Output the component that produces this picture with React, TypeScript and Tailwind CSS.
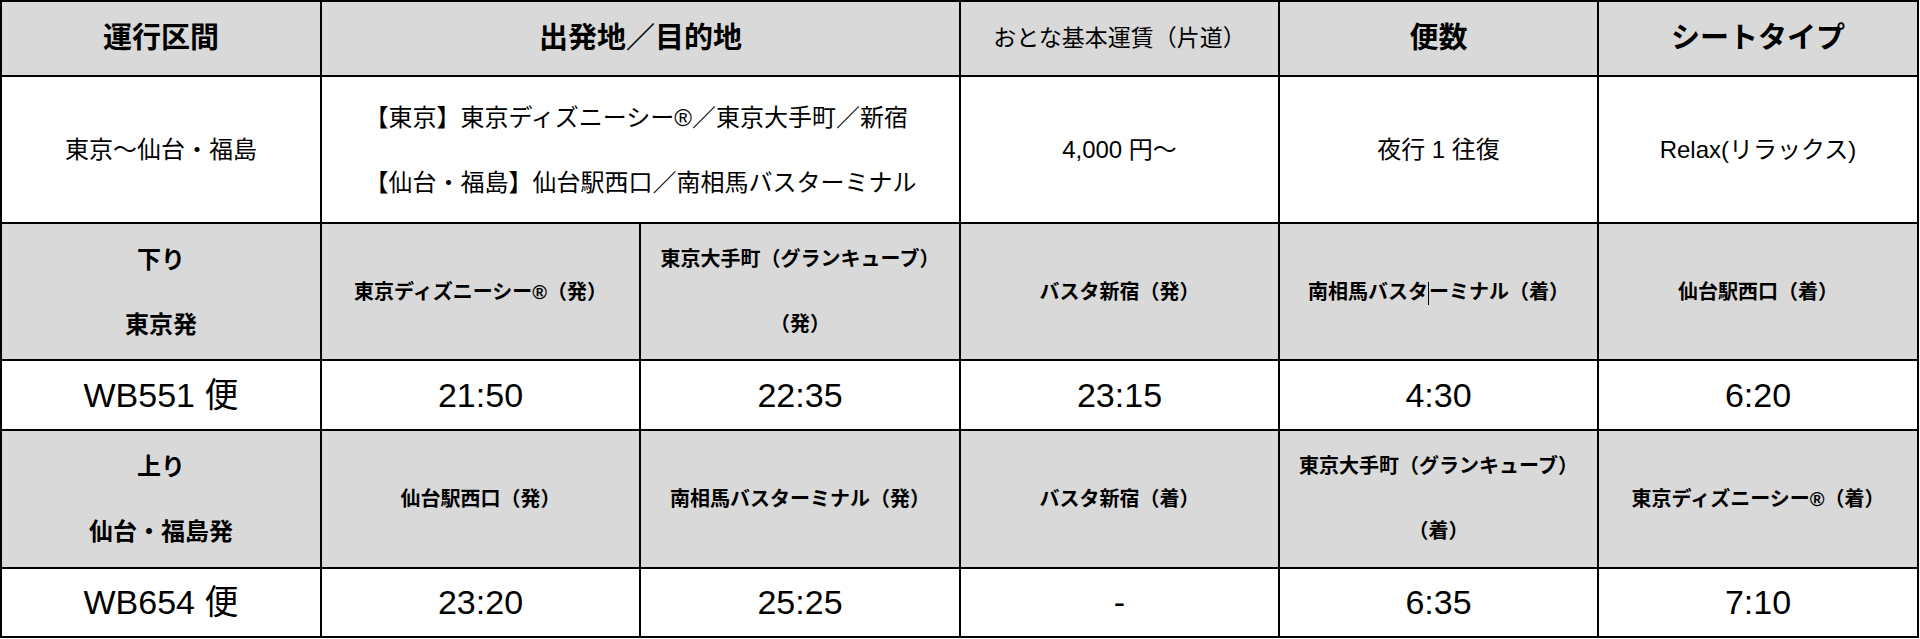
import type { ReactNode } from "react";

// 表のセル。罫線は右と下だけ持ち、外枠の左・上はグリッド側で引く
function Cell({
  children,
  className = "",
}: {
  children: ReactNode;
  className?: string;
}) {
  return (
    <div
      className={`flex items-center justify-center border-r-2 border-b-2 border-black text-center ${className}`}
    >
      {children}
    </div>
  );
}

// 2行に分かれるセル (行間が広い)
function TwoLines({ top, bottom }: { top: ReactNode; bottom: ReactNode }) {
  return (
    <div className="flex flex-col leading-[65px]">
      <span>{top}</span>
      <span>{bottom}</span>
    </div>
  );
}

const gray = "bg-[#d9d9d9]";
const head = `${gray} text-[29px] font-bold`;
const sub = `${gray} text-[20px] font-bold`;
const time = "bg-white text-[34px]";

export default function App() {
  return (
    <div className="min-h-[639px] bg-white font-['Liberation_Sans','Noto_Sans_CJK_JP',sans-serif] text-black">
      <div className="grid w-[1919px] grid-cols-[320px_319px_320px_319px_319px_320px] grid-rows-[75px_147px_137px_70px_138px_69px] border-t-2 border-l-2 border-black">
        {/* 見出し */}
        <Cell className={head}>運行区間</Cell>
        <Cell className={`${head} col-span-2`}>出発地／目的地</Cell>
        <Cell className={`${gray} text-[23px]`}>おとな基本運賃（片道）</Cell>
        <Cell className={head}>便数</Cell>
        <Cell className={head}>シートタイプ</Cell>

        {/* 概要 */}
        <Cell className="bg-white text-[24px]">東京～仙台・福島</Cell>
        <Cell className="col-span-2 bg-white text-[24px]">
          <div className="text-left">
            <TwoLines
              top="【東京】東京ディズニーシー®／東京大手町／新宿"
              bottom="【仙台・福島】仙台駅西口／南相馬バスターミナル"
            />
          </div>
        </Cell>
        <Cell className="bg-white text-[24px]">4,000 円～</Cell>
        <Cell className="bg-white text-[24px]">夜行 1 往復</Cell>
        <Cell className="bg-white text-[24px]">Relax(リラックス)</Cell>

        {/* 下り */}
        <Cell className={`${gray} text-[24px] font-bold`}>
          <TwoLines top="下り" bottom="東京発" />
        </Cell>
        <Cell className={sub}>東京ディズニーシー®（発）</Cell>
        <Cell className={sub}>
          <TwoLines top="東京大手町（グランキューブ）" bottom="（発）" />
        </Cell>
        <Cell className={sub}>バスタ新宿（発）</Cell>
        <Cell className={sub}>
          <span>
            南相馬バスタ
            <span className="inline-block h-[23px] w-px bg-black align-middle" />
            ーミナル（着）
          </span>
        </Cell>
        <Cell className={sub}>仙台駅西口（着）</Cell>

        <Cell className={time}>WB551 便</Cell>
        <Cell className={time}>21:50</Cell>
        <Cell className={time}>22:35</Cell>
        <Cell className={time}>23:15</Cell>
        <Cell className={time}>4:30</Cell>
        <Cell className={time}>6:20</Cell>

        {/* 上り */}
        <Cell className={`${gray} text-[24px] font-bold`}>
          <TwoLines top="上り" bottom="仙台・福島発" />
        </Cell>
        <Cell className={sub}>仙台駅西口（発）</Cell>
        <Cell className={sub}>南相馬バスターミナル（発）</Cell>
        <Cell className={sub}>バスタ新宿（着）</Cell>
        <Cell className={sub}>
          <TwoLines top="東京大手町（グランキューブ）" bottom="（着）" />
        </Cell>
        <Cell className={sub}>東京ディズニーシー®（着）</Cell>

        <Cell className={time}>WB654 便</Cell>
        <Cell className={time}>23:20</Cell>
        <Cell className={time}>25:25</Cell>
        <Cell className={time}>-</Cell>
        <Cell className={time}>6:35</Cell>
        <Cell className={time}>7:10</Cell>
      </div>
    </div>
  );
}
